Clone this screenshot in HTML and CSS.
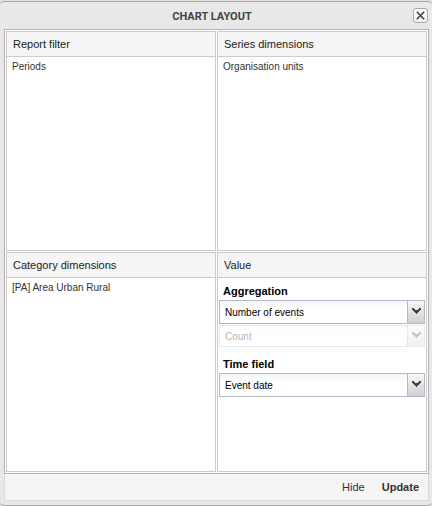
FILE: index.html
```html
<!DOCTYPE html>
<html lang="en">
<head>
<meta charset="utf-8">
<title>Chart layout</title>
<link rel="stylesheet" href="styles.css">
</head>
<body>
<main class="window" role="dialog" aria-labelledby="window-title">
  <header class="titlebar">
    <h1 class="title" id="window-title">CHART LAYOUT</h1>
    <button class="close" type="button" aria-label="Close">
      <svg width="9" height="9" viewBox="0 0 9 9" aria-hidden="true"><path fill="none" stroke="#444" stroke-width="1.6" d="M.8.8l7.4 7.4M8.2.8L.8 8.2"/></svg>
    </button>
  </header>
  <div class="grid">
    <section class="panel">
      <h2 class="panel-title">Report filter</h2>
      <ul class="items"><li>Periods</li></ul>
    </section>
    <section class="panel">
      <h2 class="panel-title">Series dimensions</h2>
      <ul class="items"><li>Organisation units</li></ul>
    </section>
    <section class="panel">
      <h2 class="panel-title">Category dimensions</h2>
      <ul class="items"><li>[PA] Area Urban Rural</li></ul>
    </section>
    <section class="panel">
      <h2 class="panel-title">Value</h2>
      <form class="form">
        <div class="field">
          <label class="label" for="aggregation">Aggregation</label>
          <div class="combo">
            <select class="select" id="aggregation"><option>Number of events</option></select>
            <span class="trigger"><svg width="9" height="6" viewBox="0 0 9 6" shape-rendering="crispEdges" aria-hidden="true"><path fill="#444" d="M0 0h2v1h1v1h3V1h1V0h2v2H8v1H7v1H6v1H5v1H4V5H3V4H2V3H1V2H0z"/></svg></span>
          </div>
          <div class="combo combo-disabled">
            <select class="select" aria-label="Aggregation type" disabled><option>Count</option></select>
            <span class="trigger"><svg width="9" height="6" viewBox="0 0 9 6" shape-rendering="crispEdges" aria-hidden="true"><path fill="#444" d="M0 0h2v1h1v1h3V1h1V0h2v2H8v1H7v1H6v1H5v1H4V5H3V4H2V3H1V2H0z"/></svg></span>
          </div>
        </div>
        <div class="field">
          <label class="label" for="time-field">Time field</label>
          <div class="combo">
            <select class="select" id="time-field"><option>Event date</option></select>
            <span class="trigger"><svg width="9" height="6" viewBox="0 0 9 6" shape-rendering="crispEdges" aria-hidden="true"><path fill="#444" d="M0 0h2v1h1v1h3V1h1V0h2v2H8v1H7v1H6v1H5v1H4V5H3V4H2V3H1V2H0z"/></svg></span>
          </div>
        </div>
      </form>
    </section>
  </div>
  <footer class="footer">
    <button class="action" type="button">Hide</button>
    <button class="action action-primary" type="button">Update</button>
  </footer>
</main>
</body>
</html>
```
FILE: styles.css
```css
* {
  box-sizing: border-box;
}

body {
  margin: 0;
  padding-top: 1px;
  background: #e2e2e2;
  color: #222;
  font: 11px/16px "Liberation Sans", Arial, sans-serif;
}

.window {
  display: flex;
  flex-direction: column;
  min-height: calc(100vh - 1px);
  padding: 0 3px 4px 4px;
  background: #e8e8e8;
  border-top: 1px solid #a4a4a4;
  border-bottom: 1px solid #a8a8a8;
  border-radius: 4px;
}

.titlebar {
  display: grid;
  grid-template-columns: 1fr 16px;
  align-items: center;
  height: 27px;
  padding-left: 7px;
}

.title {
  margin: 0;
  padding-top: 2px;
  color: #444;
  font: bold 11px/16px Roboto, "Open Sans", sans-serif;
  text-align: center;
}

.close {
  display: flex;
  align-items: center;
  justify-content: center;
  width: 15px;
  height: 15px;
  padding: 0;
  background: linear-gradient(#fff, #eee);
  border: 1px solid #aaa;
  border-radius: 3px;
}

.grid {
  display: grid;
  flex: 1;
  grid-template-columns: 1fr 1fr;
  grid-template-rows: 1fr 1fr;
  gap: 1px;
  padding: 1px;
  background: #fff;
  border: 1px solid #b9aeae;
}

.panel {
  border: 1px solid #ccc;
}

.panel-title {
  margin: 0;
  padding: 4px 6px;
  background: #f5f5f5;
  border-bottom: 1px solid #ccc;
  font-size: 11px;
  font-weight: 400;
}

.items {
  margin: 0;
  padding: 2px 5px;
  font-size: 10px;
  color: #333;
  list-style: none;
}

.form {
  display: flex;
  flex-direction: column;
  gap: 9px;
  padding: 5px 1px;
  color: #000;
}

.field {
  display: flex;
  flex-direction: column;
  gap: 1px;
}

.label {
  padding: 0 4px;
  font-weight: 700;
}

.combo {
  display: grid;
  grid-template-columns: 1fr 17px;
  height: 24px;
  background: linear-gradient(#f2f6f6, #fff 8px);
  border: 1px solid #b5b8c8;
}

.select {
  grid-area: 1 / 1 / 2 / 3;
  min-width: 0;
  padding: 1px 20px 0 5px;
  appearance: none;
  background: none;
  border: 0;
  color: #000;
  font: 10px/16px "Liberation Sans", Arial, sans-serif;
  opacity: 1;
}

.trigger {
  display: flex;
  grid-area: 1 / 2 / 2 / 3;
  align-items: center;
  justify-content: center;
  padding-bottom: 2px;
  background: linear-gradient(#f8f8f8, #d0d0d0);
  border-left: 1px solid #b5b8c8;
  pointer-events: none;
}

.combo-disabled {
  height: 22px;
  opacity: 0.3;
}

.footer {
  display: flex;
  justify-content: flex-end;
  gap: 17px;
  padding: 5px 9px;
  background: #f5f5f5;
  border: 1px solid #dadada;
  border-top: 0;
}

.action {
  padding: 0;
  background: none;
  border: 0;
  color: #333;
  font: 11px/16px "Liberation Sans", Arial, sans-serif;
}

.action-primary {
  font-weight: 700;
}
```
